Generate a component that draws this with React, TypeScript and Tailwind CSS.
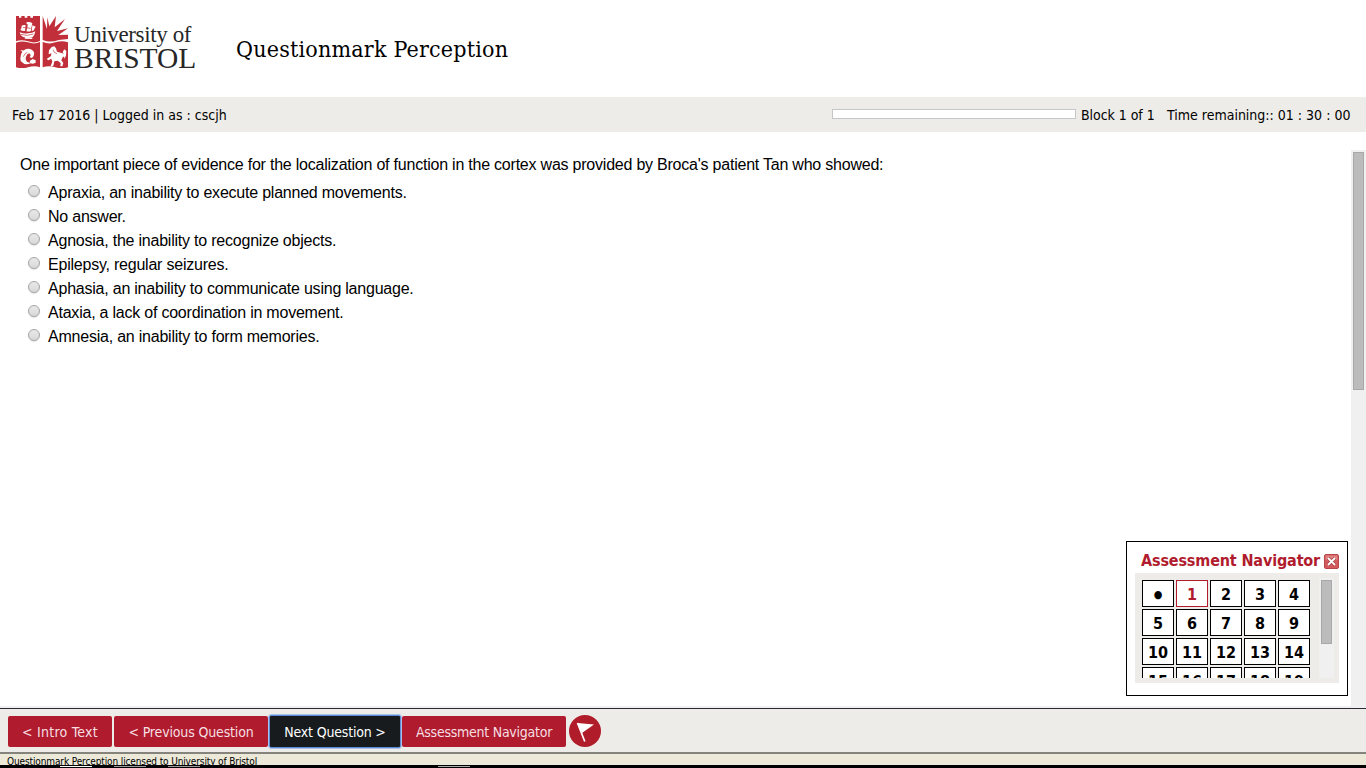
const ui = "font-['DejaVu_Sans_Condensed','DejaVu_Sans',sans-serif] [font-stretch:condensed]";

const answers = [
  "Apraxia, an inability to execute planned movements.",
  "No answer.",
  "Agnosia, the inability to recognize objects.",
  "Epilepsy, regular seizures.",
  "Aphasia, an inability to communicate using language.",
  "Ataxia, a lack of coordination in movement.",
  "Amnesia, an inability to form memories.",
];

const cells = ["●", ...Array.from({ length: 19 }, (_, i) => String(i + 1))];

function Crest() {
  return (
    <svg viewBox="18 18 156 156" className="h-[52px] w-[52px] shrink-0">
      <g fill="#c1303a">
        <path d="M18 18h9v5h7v-5h10v5h8v-5h9v5h8v-5h21v75q-16 8-36 1-20-6-36 0z" />
        <path d="M98 18l13 39 1-35 6 27 20-31-4 34 31-25-24 36 33-8-29 20 29-1v13l-28 3q-24 9-48 0z" />
        <path d="M18 98q18-7 36-1 20 7 36-1v76q-16-6-36 0-18 5-36 0z" />
        <path d="M98 96q20 8 38 1 20-7 38 0v75q-18 5-38 0-20-6-38 0z" />
      </g>
      <g fill="#fff">
        <path d="M29 67q14 5 26 3 12 0 21-6-2 12-8 17-17 4-30-1-8-5-9-13z" />
        <path d="M35 47q6-4 12-1l-2 17q-8 1-14-3 5-6 4-13zM49 37q11-3 18 3l-5 24q-7 2-14-1 6-12 1-26zM67 46l10 4-7 12-5 1z" />
        <path d="M46 80l-2 6 22 1 2-4z" />
        <path d="M31 146q1-22 17-29 17-4 24 10 2 10-6 17l-7-2q5-6 1-11-7-2-10 5-7 12 2 20l11 3q-16 8-25-1-8-4-7-12z" />
        <path d="M59 153l9-6 9 4v7l-8 3-8-1zM38 127l-7-7 12 2z" />
        <path d="M117 121l8-10 8-2 5 6 3 10 11 3 9 3 2 8-5 3-4 9 6 8-3 10h-6l1-10-9-7-10 2-3 13-9 3 6-15-3-9-9 5-5-4 13-9 1-8-8 3z" />
      </g>
      <g fill="none" stroke="#c1303a" strokeWidth="2">
        <path d="M32 73q20 7 38-1M53 42l-5 23M39 52l23 3M40 140q4-10 12-13M129 119l4 8 8 4" />
      </g>
      <path d="M158 126l5-8 6 5-1 14-5 9-2-13z" fill="#fff" />
    </svg>
  );
}

function Logo() {
  return (
    <div className="flex w-[184px]">
      <Crest />
      <div className="ml-[6px] pt-[7px] font-['Liberation_Serif',serif] whitespace-nowrap text-[#272727]">
        <div className="h-[24px] text-[23px] leading-[24px] tracking-[-0.38px]">University of</div>
        <div className="text-[29.5px] leading-[23px]">BRISTOL</div>
      </div>
    </div>
  );
}

function NavButton({ label, className }: { label: string; className: string }) {
  return (
    <button className={`shrink-0 whitespace-nowrap rounded-[2px] text-center text-[14px] leading-[33px] ${className}`}>
      {label}
    </button>
  );
}

function Navigator() {
  return (
    <aside className="absolute top-[409px] left-[1126px] h-[155px] w-[222px] border border-black bg-white pt-[12px] pr-[8px] pl-[8px]">
      <div className="flex h-[19px] items-start">
        <h2 className="ml-[6px] w-[183px] whitespace-nowrap text-[16px] leading-[14px] font-bold tracking-[-0.15px] text-[#b01c2e]">
          Assessment Navigator
        </h2>
        <svg viewBox="0 0 15 15" className="h-[15px] w-[15px] shrink-0">
          <rect x=".5" y=".5" width="14" height="14" rx="1.5" fill="#d45a5c" stroke="#b8474b" />
          <path d="M1.5 1.5h12v4q-6 3-12 0z" fill="#e79a98" opacity=".65" />
          <path d="M4 4l7 7M11 4l-7 7" stroke="#a94447" strokeWidth="3.4" />
          <path d="M4 4l7 7M11 4l-7 7" stroke="#fff" strokeWidth="1.8" />
        </svg>
      </div>
      <div className="flex h-[110px] w-[204px] bg-[#edece8] pt-[5px] pl-[7px]">
        <div className="h-[100px] w-[177px] overflow-hidden pt-[2px]">
          <div className="grid w-[168px] grid-cols-5 gap-[2px]">
            {cells.map((c, i) => (
              <div
                key={c}
                className={`h-[27px] w-[32px] border bg-white text-center leading-[27px] font-bold ${
                  i === 0 ? "text-[11px]" : "text-[16px]"
                } ${i === 1 ? "border-[#b01c2e] text-[#b01c2e]" : "border-black text-black"}`}
              >
                {c}
              </div>
            ))}
          </div>
        </div>
        <div className="h-[100px] w-[15px] bg-[#f0f0f0] px-[2px] pt-[2px]">
          <div className="h-[64px] border border-[#a8a8a8] bg-[#bcbcbc]" />
        </div>
      </div>
    </aside>
  );
}

export default function App() {
  return (
    <div className={`flex h-[768px] w-[1366px] flex-col overflow-hidden bg-white text-black ${ui}`}>
      <header className="flex h-[97px] shrink-0 pt-[16px] pl-[16px]">
        <Logo />
        <h1 className="ml-[36px] pt-[17px] font-['DejaVu_Serif_Condensed','DejaVu_Serif',serif] text-[23px] leading-[32px] tracking-[0.2px] whitespace-nowrap">
          Questionmark Perception
        </h1>
      </header>

      <div className="flex h-[35px] shrink-0 bg-[#edece8] pl-[12px] text-[14px] leading-[36px] whitespace-nowrap">
        <span className="w-[820px]">Feb 17 2016 | Logged in as : cscjh</span>
        <div className="mt-[12px] h-[10px] w-[244px] border border-[#c6c6c9] bg-white" />
        <span className="ml-[5px] w-[86px] tracking-[-0.05px]">Block 1 of 1</span>
        <span>Time remaining:: 01 : 30 : 00</span>
      </div>

      <main className="relative flex h-[574px] shrink-0 font-['Liberation_Sans',sans-serif]">
        <div className="w-[1351px] pt-[23px] pl-[20px] text-[16px] tracking-[-0.222px]">
          <p className="leading-[20px]">
            One important piece of evidence for the localization of function in the cortex was provided by Broca's
            patient Tan who showed:
          </p>
          <ul className="mt-[5px]">
            {answers.map((a) => (
              <li key={a} className="flex h-[24px] pl-[8px] leading-[26px]">
                <span className="mt-[5px] mr-[8px] h-[12px] w-[12px] rounded-full border border-[#a3a3a3] bg-linear-to-b from-[#e9e9e9] to-[#d8d8d8] shadow-[0_1px_1px_#e4e4e4]" />
                {a}
              </li>
            ))}
          </ul>
        </div>
        <div className="mt-[18px] w-[15px] bg-[#f0f0f0] px-[2px] pt-[2px]">
          <div className="h-[238px] border border-[#a8a8a8] bg-[#bcbcbc]" />
        </div>
        <div className={ui}>
          <Navigator />
        </div>
      </main>

      <footer className="shrink-0">
        <div className="flex h-[46px] border-t-2 border-[#f0f0f3] bg-[#edece8]">
          <div className="flex w-full border-t border-[#2b2b31] pl-[8px]">
            <NavButton label="< Intro Text" className="mt-[7px] h-[31px] w-[104px] bg-[#b01c2e] tracking-[0.25px] text-[#f6dfe1]" />
            <NavButton label="< Previous Question" className="mt-[7px] ml-[2px] h-[31px] w-[154px] bg-[#b01c2e] tracking-[-0.15px] text-[#f6dfe1]" />
            <NavButton
              label="Next Question >"
              className="mt-[6px] ml-[1px] h-[33px] w-[132px] border border-[#5b8bd8] bg-[#171b1e] tracking-[-0.18px] text-white outline-1 outline-[#a9c1e8]"
            />
            <NavButton label="Assessment Navigator" className="mt-[7px] ml-[1px] h-[31px] w-[164px] bg-[#b01c2e] tracking-[-0.25px] text-[#f6dfe1]" />
            <svg viewBox="0 0 32 32" className="mt-[6px] ml-[3px] h-[32px] w-[32px]">
              <circle cx="16" cy="16" r="16" fill="#b01c2a" />
              <path d="M8.5 8L25 9.5 13 18z" fill="#fff" />
              <path d="M8.5 8L15.8 26.5" stroke="#fff" strokeWidth="1.7" fill="none" />
            </svg>
          </div>
        </div>
        <div className="h-[13px] overflow-hidden border-t-2 border-[#85847c] bg-[#ece9d8] pl-[7px] text-[10px] leading-[16px] tracking-[-0.12px] whitespace-nowrap">
          Questionmark Perception licensed to University of Bristol
        </div>
        <div className="flex h-[3px] bg-black pt-[1px] pl-[60px]">
          <span className="h-[1px] w-[32px] bg-white" />
          <span className="ml-[22px] h-[1px] w-[32px] bg-[#999]" />
          <span className="ml-[22px] h-[1px] w-[32px] bg-[#999]" />
          <span className="ml-[238px] h-[1px] w-[32px] bg-[#aaa]" />
        </div>
      </footer>
    </div>
  );
}
